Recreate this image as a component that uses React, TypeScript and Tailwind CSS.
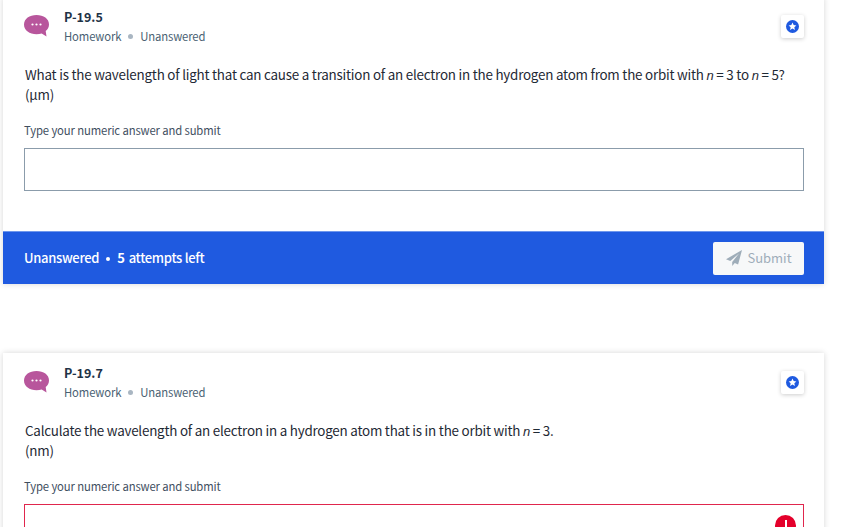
const FONT = "font-['Noto_Sans_CJK_SC','Noto_Sans',sans-serif]";

function ChatIcon() {
  return (
    <svg width="25" height="22" viewBox="0 0 25 22" className="shrink-0">
      <path
        d="M12.500 0C19.500 0 25 3.600 25 9.500c0 2.900-1.300 5-3.300 6.500l.8 5.500-4.800-3C16.200 19 14.400 19.200 12.500 19.200 5.500 19.200 0 15.500 0 9.500 0 3.600 5.500 0 12.500 0Z"
        fill="#b8569c"
      />
      <circle cx="8.500" cy="9.500" r="1.100" fill="#fff" />
      <circle cx="12.500" cy="9.500" r="1.100" fill="#fff" />
      <circle cx="16.500" cy="9.500" r="1.100" fill="#fff" />
    </svg>
  );
}

function StarBadge() {
  return (
    <button className="flex h-[23px] w-[23px] items-center justify-center rounded-[2px] bg-white shadow-[0_1px_4px_rgba(0,0,0,0.2)]">
      <svg width="13" height="13" viewBox="0 0 13 13">
        <circle cx="6.500" cy="6.500" r="6.500" fill="#1f5ae0" />
        <path
          d="M6.500 2.600l1.150 2.500 2.700.3-2 1.850.55 2.700-2.400-1.350-2.400 1.350.55-2.700-2-1.850 2.700-.3Z"
          fill="#fff"
        />
      </svg>
    </button>
  );
}

function PlaneIcon() {
  return (
    <svg width="16" height="16" viewBox="0 0 16 16" className="shrink-0">
      <path d="M16 0 0 9.200l4.300 1.900L13 3.500 6.200 12v4l2.600-3 3.300 1.600Z" fill="#9fadb9" />
    </svg>
  );
}

function Header({ code }: { code: string }) {
  return (
    <div className="flex items-start justify-between pr-5">
      <div className="flex items-start gap-[15px] pl-[21px]">
        <div className="pt-[8px]">
          <ChatIcon />
        </div>
        <div>
          <div className="text-[12.500px] leading-[20px] font-semibold text-[#1f3347]">{code}</div>
          <div className="flex h-[18px] items-center text-[11.300px] tracking-[-0.13px] text-[#4a5f73]">
            Homework
            <span className="mx-[7px] h-[5px] w-[5px] rounded-full bg-[#a9b6c2]" />
            Unanswered
          </div>
        </div>
      </div>
      <div className="pt-[8px]">
        <StarBadge />
      </div>
    </div>
  );
}

function N() {
  return <i className="font-['Liberation_Sans',sans-serif] text-[13px]">n</i>;
}

function Card({
  code,
  question,
  unit,
  error,
  footer,
  className = "",
}: {
  code: string;
  question: React.ReactNode;
  unit: string;
  error?: boolean;
  footer?: boolean;
  className?: string;
}) {
  return (
    <section className={`flex w-[821px] shrink-0 flex-col bg-white shadow-[0_0_6px_rgba(0,0,0,0.16)] ${className}`}>
      <div className="pt-[10px]">
        <Header code={code} />
        <p className="mt-[20px] pl-[22px] text-[13.400px] leading-[18px] tracking-[-0.22px] text-[#1f2a35]">
          {question}
          <br />({unit})
        </p>
        <div className="mt-[18px] pl-[21px] text-[11.300px] leading-[18px] tracking-[-0.13px] text-[#3f4f5f]">
          Type your numeric answer and submit
        </div>
        <div
          className={
            error
              ? "relative mt-[9px] ml-[21px] h-[43px] w-[780px] border border-[#e0264d]"
              : "mt-[9px] ml-[21px] h-[43px] w-[780px] border border-[#8b9cab]"
          }
        >
          {error && (
            <span className="absolute top-[10px] right-[7px] flex h-[21px] w-[21px] items-center justify-center rounded-full bg-[#e4002b]">
              <span className="h-[11px] w-[2px] bg-white" />
            </span>
          )}
        </div>
      </div>
      {footer && (
        <div className="mt-[40px] flex h-[53px] items-center justify-between border-t border-[#6f97ec] bg-[#1f5ae0] pr-5 pl-[21px]">
          <div className="flex items-center pb-px text-[13px] font-medium tracking-[-0.3px] text-white">
            Unanswered
            <span className="mx-[7px] mt-[2px] h-[4px] w-[4px] rounded-full bg-white" />
            <span className="font-semibold">5</span>
            <span className="ml-[4px]">attempts left</span>
          </div>
          <button className="flex h-[33px] w-[91px] items-center justify-center gap-[5px] rounded-[2px] bg-[#f7f8f9] pb-px pl-px text-[13px] text-[#9fadb9]">
            <PlaneIcon />
            Submit
          </button>
        </div>
      )}
    </section>
  );
}

export default function App() {
  return (
    <div className={`flex h-[527px] w-[850px] flex-col gap-[69px] overflow-hidden bg-white pl-[3px] ${FONT}`}>
      <Card
        className="-mt-[3px]"
        code="P-19.5"
        unit="µm"
        footer
        question={
          <>
            What is the wavelength of light that can cause a transition of an electron in the hydrogen atom from the orbit with <N /> = 3 to <N /> = 5?
          </>
        }
      />
      <Card
        code="P-19.7"
        unit="nm"
        error
        question={
          <>
            Calculate the wavelength of an electron in a hydrogen atom that is in the orbit with <N /> = 3.
          </>
        }
      />
    </div>
  );
}
